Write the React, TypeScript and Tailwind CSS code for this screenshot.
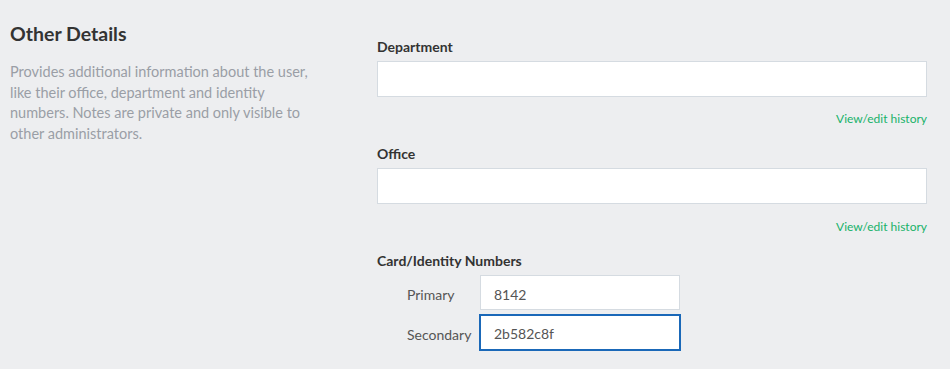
import React from "react";

export default function App() {
  return (
    <div
      className="w-[950px] h-[369px] bg-[#edeef0] flex overflow-hidden"
      style={{ fontFamily: "Lato, 'Noto Sans', sans-serif" }}
    >
      <div className="w-[377px] shrink-0 pl-[10px] pt-[22px]">
        <h2 className="text-[19.5px] font-bold text-[#333] leading-[24px]">Other Details</h2>
        <p className="mt-[16px] w-[312px] text-[14.5px] leading-[20.5px] text-[#9a9ea6]">
          Provides additional information about the user, like their office, department and identity numbers. Notes are private and only visible to other administrators.
        </p>
      </div>
      <div className="w-[550px] pt-[38px]">
        <label className="block text-[14px] font-bold text-[#333] leading-[18px]">Department</label>
        <input className="mt-[5px] block w-full h-[36px] bg-white border border-[#d5dbe1] outline-none" />
        <div className="mt-[14px] text-right text-[12px] leading-[16px] text-[#18b26a]">View/edit history</div>
        <label className="mt-[18px] block text-[14px] font-bold text-[#333] leading-[18px]">Office</label>
        <input className="mt-[5px] block w-full h-[36px] bg-white border border-[#d5dbe1] outline-none" />
        <div className="mt-[15px] text-right text-[12px] leading-[16px] text-[#18b26a]">View/edit history</div>
        <label className="mt-[17px] block text-[14px] font-bold text-[#333] leading-[18px]">Card/Identity Numbers</label>
        <div className="mt-[5px] flex flex-col gap-[4px]">
          <div className="flex items-center">
            <span className="w-[103px] pl-[30px] pt-[4px] text-[14px] text-[#555]">Primary</span>
            <input
              defaultValue="8142"
              className="w-[200px] h-[35px] bg-white border border-[#d5dbe1] px-[13px] pt-[3px] text-[14px] text-[#555] outline-none"
            />
          </div>
          <div className="flex items-center">
            <span className="w-[102px] pl-[30px] pt-[4px] text-[14px] text-[#555]">Secondary</span>
            <input
              defaultValue="2b582c8f"
              className="w-[202px] h-[37px] bg-white border-2 border-[#1a68b8] px-[13px] pt-[1px] text-[14px] text-[#555] outline-none"
            />
          </div>
        </div>
      </div>
    </div>
  );
}
